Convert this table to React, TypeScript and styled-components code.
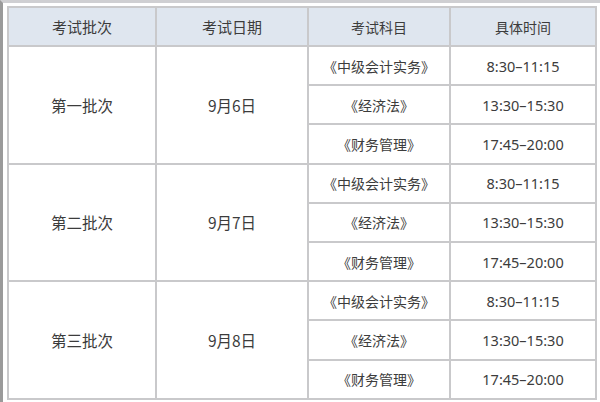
import React from "react";
import styled, { createGlobalStyle } from "styled-components";

const Global = createGlobalStyle`
  html, body { margin: 0; padding: 0; background: #fff; }
  body { font-family: "Noto Sans CJK SC", "Noto Sans", sans-serif; }
`;

const Page = styled.div`
  width: 600px;
  height: 402px;
  box-sizing: border-box;
  border-top: 3px solid #cfcfd2;
  border-left: 3px solid #9a9a9a;
  padding: 3px 5px 0 4px;
  background: #fff;
  overflow: hidden;
`;

const Table = styled.table`
  width: 588px;
  border-collapse: collapse;
  table-layout: fixed;
  color: #3c3c3c;
  font-size: 14px;
`;

const Th = styled.th<{ $wide?: boolean }>`
  background: #dfe6ef;
  font-weight: 400;
  height: 37px;
  border: 2px solid #c9c9cb;
  text-align: center;
  padding: 0;
  font-size: ${(p) => (p.$wide ? "15px" : "14px")};
`;

const Td = styled.td<{ $wide?: boolean }>`
  height: 37.2px;
  border: 2px solid #c9c9cb;
  text-align: center;
  padding: 0;
  background: #fff;
  font-size: ${(p) => (p.$wide ? "15.5px" : "14px")};
`;

const Time = styled.span`
  font-family: "Noto Sans", sans-serif;
  font-size: 14.5px;
`;

const subjects = [
  ["《中级会计实务》", "8:30–11:15"],
  ["《经济法》", "13:30–15:30"],
  ["《财务管理》", "17:45–20:00"],
];

const batches = [
  ["第一批次", "9月6日"],
  ["第二批次", "9月7日"],
  ["第三批次", "9月8日"],
];

export default function App() {
  return (
    <>
      <Global />
      <Page>
        <Table>
          <colgroup>
            <col style={{ width: 148 }} />
            <col style={{ width: 152 }} />
            <col style={{ width: 142 }} />
            <col style={{ width: 146 }} />
          </colgroup>
          <thead>
            <tr>
              <Th $wide>考试批次</Th>
              <Th $wide>考试日期</Th>
              <Th>考试科目</Th>
              <Th>具体时间</Th>
            </tr>
          </thead>
          <tbody>
            {batches.map(([b, d]) =>
              subjects.map(([s, t], i) => (
                <tr key={b + i}>
                  {i === 0 && (
                    <Td $wide rowSpan={3}>
                      {b}
                    </Td>
                  )}
                  {i === 0 && (
                    <Td $wide rowSpan={3}>
                      {d}
                    </Td>
                  )}
                  <Td>{s}</Td>
                  <Td>
                    <Time>{t}</Time>
                  </Td>
                </tr>
              ))
            )}
          </tbody>
        </Table>
      </Page>
    </>
  );
}
